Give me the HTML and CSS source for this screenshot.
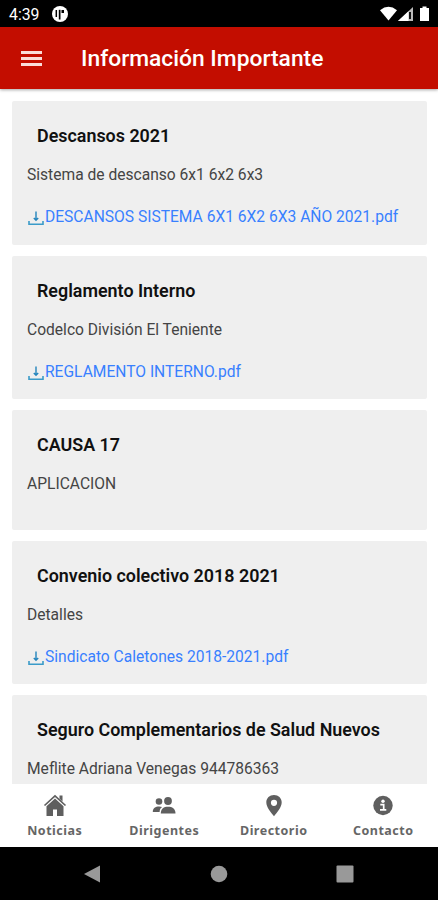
FILE: index.html
```
<!DOCTYPE html>
<html lang="es">
<head>
  <meta charset="UTF-8">
  <meta name="viewport" content="width=device-width, initial-scale=1.0">
  <title>Información Importante</title>
  <link rel="stylesheet" href="styles.css">
</head>
<body>
  <svg class="sprite" width="0" height="0">
    <symbol id="download" viewBox="0 0 16 16">
      <path d="M1 10v3.200h14V10" fill="none" stroke="#3b9bc9" stroke-width="1.600"/>
      <path d="M8 .5v8M5.800 7L8 9.300 10.200 7" fill="none" stroke="#2485bd" stroke-width="1.400"/>
    </symbol>
  </svg>

  <div class="status-bar">
    <span class="time">4:39</span>
    <svg class="app-badge" width="16" height="16" viewBox="0 0 16 16">
      <circle cx="8" cy="8" r="8" fill="#fff"/>
      <path d="M4.300 4v7" fill="none" stroke="#000" stroke-width="1.500"/>
      <path d="M6.800 13.500V3.800h1.700v9.700z" fill="#000"/>
      <path d="M9.500 4h2.500v3H9.500z" fill="#000"/>
    </svg>
    <svg class="signals" width="50" height="16" viewBox="0 0 50 16">
      <path d="M0 4.200Q8.500-2.600 17 4.200L8.500 14.500z" fill="#fff"/>
      <path d="M33 1v14H18z" fill="#bbb"/>
      <path d="M28.500 5.200V15H18z" fill="#fff"/>
      <path d="M30 6v7" stroke="#000" stroke-width="1.800"/>
      <path d="M42.500 .5h4V2H49V15h-9V2h2.500z" fill="#fff"/>
    </svg>
  </div>

  <header class="toolbar">
    <button class="menu" aria-label="Menú"><span></span><span></span><span></span></button>
    <h1>Información Importante</h1>
  </header>

  <main class="content">
    <div class="card">
      <h2>Descansos 2021</h2>
      <p>Sistema de descanso 6x1 6x2 6x3</p>
      <a href="#"><svg><use href="#download"/></svg><span>DESCANSOS SISTEMA 6X1 6X2 6X3 AÑO 2021.pdf</span></a>
    </div>
    <div class="card">
      <h2>Reglamento Interno</h2>
      <p>Codelco División El Teniente</p>
      <a href="#"><svg><use href="#download"/></svg><span>REGLAMENTO INTERNO.pdf</span></a>
    </div>
    <div class="card no-file">
      <h2>CAUSA 17</h2>
      <p>APLICACION</p>
    </div>
    <div class="card">
      <h2>Convenio colectivo 2018 2021</h2>
      <p>Detalles</p>
      <a href="#"><svg><use href="#download"/></svg><span>Sindicato Caletones 2018-2021.pdf</span></a>
    </div>
    <div class="card">
      <h2>Seguro Complementarios de Salud Nuevos</h2>
      <p>Meflite Adriana Venegas 944786363</p>
    </div>
  </main>

  <nav class="tabs">
    <a href="#">
      <svg width="24" height="24" viewBox="0 0 24 24">
        <path fill-rule="evenodd" d="M12 5.500l8.500 7.800V23h-17v-9.700zM10 16.500V23h4v-6.500z"/>
        <path d="M1.500 12.500L12 2.800l10.500 9.700" fill="none" stroke="#5f5f5f" stroke-width="1.700"/>
        <path d="M16.500 2.500h3v6l-3-2.800z"/>
      </svg>
      <span>Noticias</span>
    </a>
    <a href="#">
      <svg width="24" height="24" viewBox="0 0 24 24">
        <circle cx="7" cy="8.500" r="3.300"/>
        <circle cx="16" cy="8" r="3.900"/>
        <path d="M.8 19c0-4 2.700-5.500 6.200-5.500 1.300 0 2.300.2 3.100.6-1.700 1.200-2.500 2.700-2.500 4.900z"/>
        <path d="M8.800 20.500c0-5 3-6.800 7.200-6.800s7.500 1.800 7.500 6.800z"/>
      </svg>
      <span>Dirigentes</span>
    </a>
    <a href="#">
      <svg width="24" height="24" viewBox="0 0 24 24">
        <path fill-rule="evenodd" d="M12 2c-4.400 0-7.700 3.200-7.700 7.300C4.300 14.500 9 19.500 12 23.300c3-3.800 7.700-8.800 7.700-14C19.700 5.200 16.400 2 12 2zm0 4.700a3.100 3.100 0 1 1 0 6.200 3.100 3.100 0 0 1 0-6.200z"/>
      </svg>
      <span>Directorio</span>
    </a>
    <a href="#">
      <svg width="24" height="24" viewBox="0 0 24 24">
        <circle cx="12" cy="12.500" r="9.700"/>
        <circle cx="12" cy="8.300" r="1.700" fill="#fff"/>
        <path d="M9.300 11.700h3.400v5M9 16.800h6.300" fill="none" stroke="#fff" stroke-width="1.700"/>
      </svg>
      <span>Contacto</span>
    </a>
  </nav>

  <div class="system-nav">
    <svg width="18" height="18" viewBox="0 0 18 18"><path d="M0 9L16 .5v17z"/></svg>
    <svg width="18" height="18" viewBox="0 0 18 18"><circle cx="9" cy="9" r="8.300"/></svg>
    <svg width="18" height="18" viewBox="0 0 18 18"><rect x=".5" y=".5" width="17" height="17" rx="1"/></svg>
  </div>
</body>
</html>
```
FILE: styles.css
```
* {
  box-sizing: border-box;
}

body {
  margin: 0;
  height: 900px;
  display: flex;
  flex-direction: column;
  overflow: hidden;
  font-family: Roboto, sans-serif;
  background: #fff;
  color: #111;
}

.sprite {
  display: none;
}

.status-bar {
  height: 27px;
  flex: none;
  display: flex;
  align-items: center;
  background: #000;
  color: #fff;
  padding: 1px 8px 0 9px;
}

.time {
  width: 43px;
  font-size: 15.8px;
}

.signals {
  margin-left: auto;
}

.toolbar {
  height: 62px;
  flex: none;
  display: flex;
  align-items: center;
  background: #c30d00;
  color: #fff;
  padding: 0 21px;
  box-shadow: 0 1px 3px rgba(0,0,0,0.35);
}

.menu {
  width: 21px;
  margin-right: 39px;
  padding: 0;
  border: 0;
  background: none;
  display: flex;
  flex-direction: column;
  gap: 3px;
}

.menu span {
  height: 3px;
  background: #fbdcd9;
}

.toolbar h1 {
  margin: 0;
  font-size: 22.8px;
  font-weight: 500;
}

.content {
  flex: 1;
  min-height: 0;
  overflow: hidden;
  padding: 12px 11px 0 12px;
}

.card {
  height: 143.5px;
  margin-bottom: 11px;
  padding: 24px 15px 0;
  border-radius: 2px;
  background: #efefef;
}

.card.no-file {
  height: 119.5px;
}

.card h2 {
  margin: 0 0 17px 10px;
  font-size: 17.9px;
  line-height: 22px;
  font-weight: 600;
}

.card p {
  margin: 0 0 21px;
  font-size: 15.6px;
  line-height: 22px;
  color: #444;
}

.card a {
  display: flex;
  font-size: 15.6px;
  line-height: 20px;
  color: #3880ff;
  text-decoration: none;
}

.card a svg {
  width: 16px;
  height: 16px;
  flex: none;
  margin: 4px 1px 0 1px;
}

.tabs {
  height: 63px;
  flex: none;
  display: flex;
  background: #fff;
}

.tabs a {
  flex: 1;
  display: flex;
  flex-direction: column;
  align-items: center;
  padding-top: 9px;
  color: #666;
  font-family: "Noto Sans", sans-serif;
  font-size: 12.5px;
  font-weight: 700;
  line-height: 18px;
  letter-spacing: 0.5px;
  text-decoration: none;
}

.tabs svg {
  fill: #5f5f5f;
  margin-bottom: 5px;
}

.system-nav {
  height: 53px;
  flex: none;
  display: flex;
  justify-content: center;
  align-items: center;
  gap: 108px;
  background: #000;
}

.system-nav svg {
  fill: #999;
}
```
